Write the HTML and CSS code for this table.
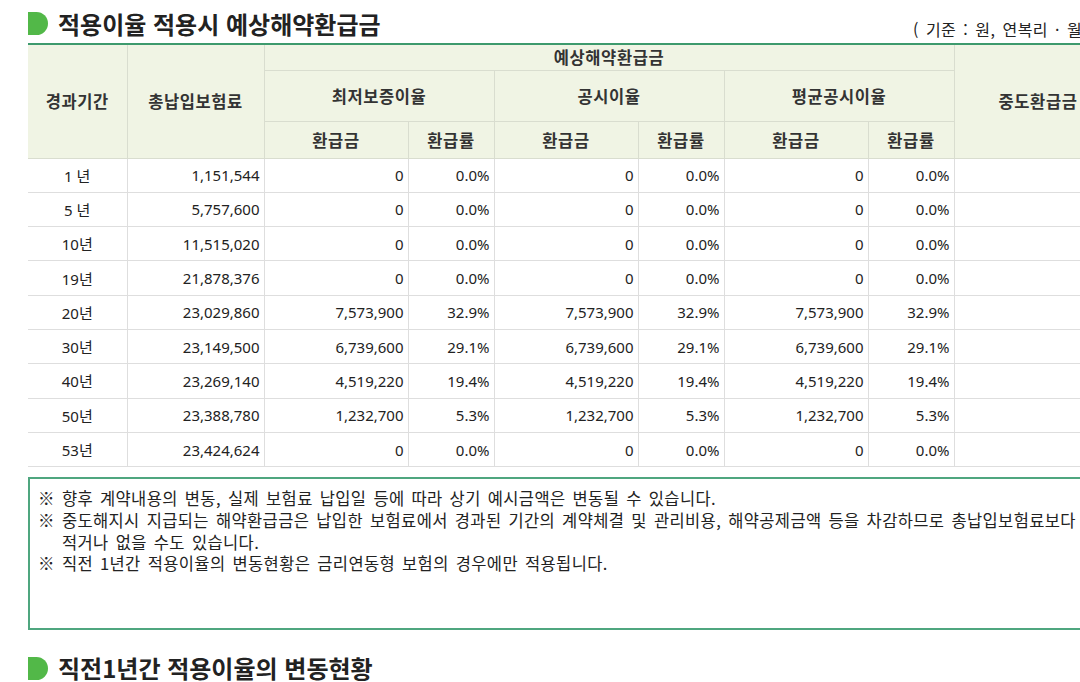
FILE: index.html
```html
<!DOCTYPE html>
<html lang="ko">
<head>
<meta charset="utf-8">
<title>적용이율 적용시 예상해약환급금</title>
<link rel="stylesheet" href="styles.css">
</head>
<body>
<div class="page">
  <div class="title-row">
    <h2 class="sec-title"><span class="bullet"></span>적용이율 적용시 예상해약환급금</h2>
    <span class="unit">( 기준 : 원, 연복리 · 월납 )</span>
  </div>
  <table class="refund">
    <colgroup>
      <col class="c-period"><col class="c-total">
      <col class="c-amt"><col class="c-rate">
      <col class="c-amt"><col class="c-rate">
      <col class="c-amt"><col class="c-rate">
      <col class="c-mid">
    </colgroup>
    <thead>
      <tr class="h1">
        <th rowspan="3">경과기간</th>
        <th rowspan="3">총납입보험료</th>
        <th colspan="6">예상해약환급금</th>
        <th rowspan="3">중도환급금</th>
      </tr>
      <tr class="h2">
        <th colspan="2">최저보증이율</th>
        <th colspan="2">공시이율</th>
        <th colspan="2">평균공시이율</th>
      </tr>
      <tr class="h3">
        <th>환급금</th><th>환급률</th>
        <th>환급금</th><th>환급률</th>
        <th>환급금</th><th>환급률</th>
      </tr>
    </thead>
    <tbody>
      <tr><td class="ctr">1 년</td><td>1,151,544</td><td>0</td><td>0.0%</td><td>0</td><td>0.0%</td><td>0</td><td>0.0%</td><td></td></tr>
      <tr><td class="ctr">5 년</td><td>5,757,600</td><td>0</td><td>0.0%</td><td>0</td><td>0.0%</td><td>0</td><td>0.0%</td><td></td></tr>
      <tr><td class="ctr">10년</td><td>11,515,020</td><td>0</td><td>0.0%</td><td>0</td><td>0.0%</td><td>0</td><td>0.0%</td><td></td></tr>
      <tr><td class="ctr">19년</td><td>21,878,376</td><td>0</td><td>0.0%</td><td>0</td><td>0.0%</td><td>0</td><td>0.0%</td><td></td></tr>
      <tr><td class="ctr">20년</td><td>23,029,860</td><td>7,573,900</td><td>32.9%</td><td>7,573,900</td><td>32.9%</td><td>7,573,900</td><td>32.9%</td><td></td></tr>
      <tr><td class="ctr">30년</td><td>23,149,500</td><td>6,739,600</td><td>29.1%</td><td>6,739,600</td><td>29.1%</td><td>6,739,600</td><td>29.1%</td><td></td></tr>
      <tr><td class="ctr">40년</td><td>23,269,140</td><td>4,519,220</td><td>19.4%</td><td>4,519,220</td><td>19.4%</td><td>4,519,220</td><td>19.4%</td><td></td></tr>
      <tr><td class="ctr">50년</td><td>23,388,780</td><td>1,232,700</td><td>5.3%</td><td>1,232,700</td><td>5.3%</td><td>1,232,700</td><td>5.3%</td><td></td></tr>
      <tr><td class="ctr">53년</td><td>23,424,624</td><td>0</td><td>0.0%</td><td>0</td><td>0.0%</td><td>0</td><td>0.0%</td><td></td></tr>
    </tbody>
  </table>
  <div class="notes">
    <p>※ 향후 계약내용의 변동, 실제 보험료 납입일 등에 따라 상기 예시금액은 변동될 수 있습니다.</p>
    <p>※ 중도해지시 지급되는 해약환급금은 납입한 보험료에서 경과된 기간의 계약체결 및 관리비용, 해약공제금액 등을 차감하므로 총납입보험료보다 적거나 없을 수도 있습니다.</p>
    <p>※ 직전 1년간 적용이율의 변동현황은 금리연동형 보험의 경우에만 적용됩니다.</p>
  </div>
  <h2 class="sec-title sec-second"><span class="bullet"></span>직전1년간 적용이율의 변동현황</h2>
</div>
</body>
</html>
```
FILE: styles.css
```css
html, body {
  margin: 0;
  padding: 0;
  overflow: hidden;
  background: #ffffff;
}
body {
  font-family: "Noto Sans", "Noto Sans CJK KR", sans-serif;
  color: #222222;
}
.page {
  width: 1160px;
  padding-left: 28px;
}
.title-row {
  display: grid;
  grid-template-columns: 885px auto;
  align-items: center;
  height: 43px;
}
.sec-title {
  margin: 0;
  display: flex;
  align-items: center;
  gap: 10px;
  font-family: "Noto Sans CJK KR", sans-serif;
  font-size: 24px;
  font-weight: 700;
  color: #222222;
  line-height: 30px;
  white-space: nowrap;
}
.title-row .sec-title {
  margin-top: 4px;
}
.bullet {
  display: block;
  width: 20px;
  height: 23px;
  background: #52b848;
  border-radius: 0 12px 12px 0;
  flex: none;
}
.unit {
  font-family: "Noto Sans CJK KR", sans-serif;
  font-size: 16px;
  letter-spacing: 0.5px;
  word-spacing: 2px;
  color: #222222;
  white-space: nowrap;
  margin-top: 15px;
}
.refund {
  border-collapse: collapse;
  table-layout: fixed;
  width: 1094px;
  border-top: 2px solid #3d9a6d;
  font-size: 15px;
}
.c-period { width: 99px; }
.c-total { width: 137px; }
.c-amt { width: 144px; }
.c-rate { width: 86px; }
.c-mid { width: 168px; }
.refund th {
  background: #f0f4e4;
  border: 1px solid #d9ddcf;
  border-top: none;
  font-family: "Noto Sans CJK KR", sans-serif;
  font-weight: 700;
  font-size: 16.5px;
  letter-spacing: 0.6px;
  color: #333333;
  padding: 0;
}
.refund th:first-child { border-left: none; }
.refund tr.h1 { height: 26px; }
.refund tr.h2 { height: 51px; }
.refund tr.h3 { height: 37px; }
.refund td {
  border: 1px solid #dedede;
  height: 33.3px;
  padding: 0 4px 0 0;
  text-align: right;
  white-space: nowrap;
  color: #222222;
}
.refund td:first-child { border-left: none; }
.refund td.ctr {
  text-align: center;
  padding: 0;
}
.notes {
  margin-top: 10px;
  border: 2px solid #4fa67f;
  height: 153px;
  padding: 9px 8px 0 8px;
  font-family: "Noto Sans CJK KR", sans-serif;
  font-size: 16.5px;
  letter-spacing: 0.38px;
  line-height: 21.7px;
  color: #222222;
  box-sizing: border-box;
  width: 1094px;
  word-break: keep-all;
}
.notes p {
  margin: 0;
  padding-left: 24px;
  text-indent: -24px;
  word-spacing: 2px;
}
.sec-second {
  margin-top: 23px;
}
```
